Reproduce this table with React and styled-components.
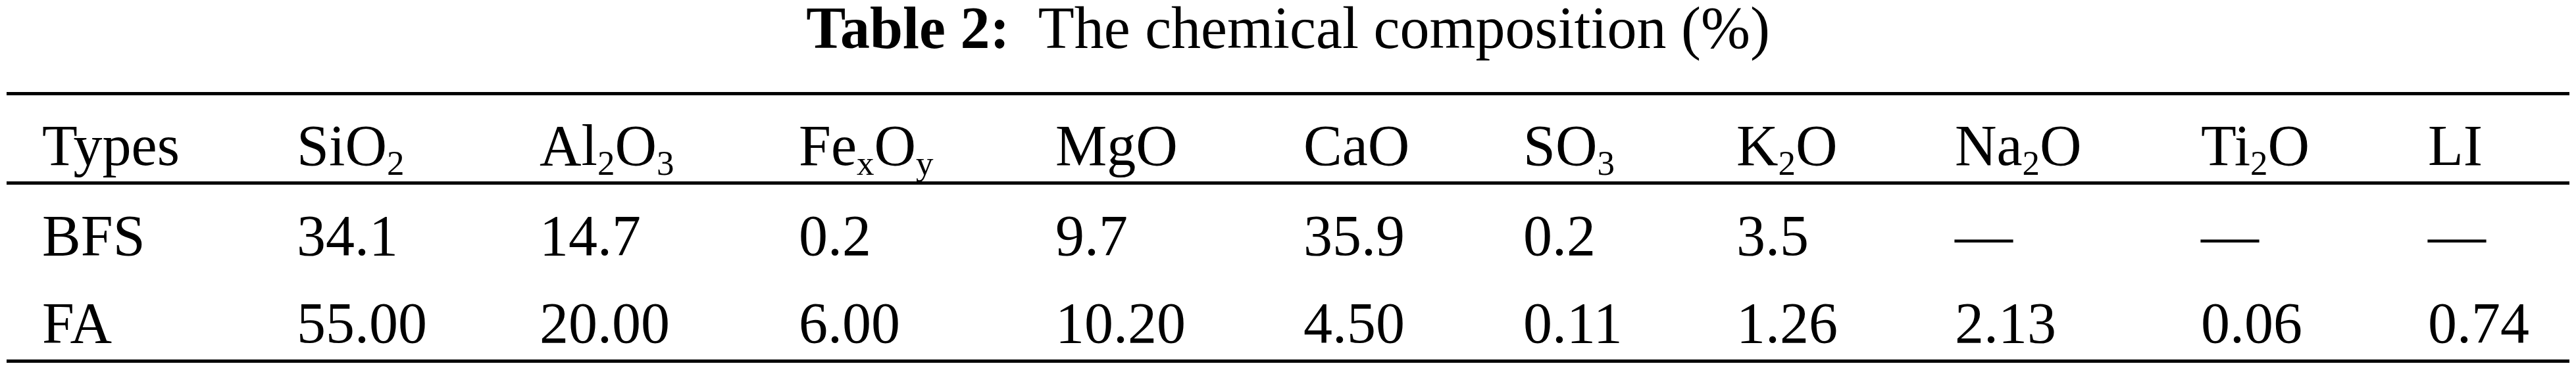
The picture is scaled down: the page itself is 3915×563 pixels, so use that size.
import React from "react";
import styled, { createGlobalStyle } from "styled-components";

const GlobalStyle = createGlobalStyle`
  html, body {
    margin: 0;
    padding: 0;
    background: #fff;
  }
  body {
    font-family: "Liberation Serif", "Times New Roman", serif;
    color: #000;
  }
`;

const Page = styled.div`
  width: 3915px;
  height: 563px;
  overflow: hidden;
  background: #fff;
  padding-top: 1px;
  box-sizing: border-box;
`;

const Caption = styled.div`
  text-align: center;
  font-size: 90px;
  line-height: 104px;
  margin-top: -10px;
  margin-bottom: 45px;
  white-space: pre;
`;

const Label = styled.span`
  font-weight: bold;
`;

const Table = styled.div`
  margin: 0 10px;
  border-top: 5px solid #000;
  border-bottom: 5px solid #000;
`;

const Row = styled.div`
  display: grid;
  grid-template-columns: 387px 369px 394px 390px 377px 334px 324px 332px 374px 345px 1fr;
  padding-left: 54px;
  box-sizing: border-box;
  height: ${props => (props.head ? "136px" : "133px")};
  padding-top: ${props => (props.head ? "33px" : "34px")};
  border-bottom: ${props => (props.head ? "5px solid #000" : "none")};
  font-size: 88px;
  line-height: 88px;
`;

const Cell = styled.div`
  white-space: nowrap;
`;

const Sub = styled.sub`
  font-size: 53px;
  line-height: 0;
  vertical-align: -15px;
`;

const headers = [
  "Types",
  <>SiO<Sub>2</Sub></>,
  <>Al<Sub>2</Sub>O<Sub>3</Sub></>,
  <>Fe<Sub>x</Sub>O<Sub>y</Sub></>,
  "MgO",
  "CaO",
  <>SO<Sub>3</Sub></>,
  <>K<Sub>2</Sub>O</>,
  <>Na<Sub>2</Sub>O</>,
  <>Ti<Sub>2</Sub>O</>,
  "LI",
];

const rows = [
  ["BFS", "34.1", "14.7", "0.2", "9.7", "35.9", "0.2", "3.5", "—", "—", "—"],
  ["FA", "55.00", "20.00", "6.00", "10.20", "4.50", "0.11", "1.26", "2.13", "0.06", "0.74"],
];

export default function App() {
  return (
    <Page>
      <GlobalStyle />
      <Caption>
        <Label>Table 2:</Label>{"  The chemical composition (%)"}
      </Caption>
      <Table>
        <Row head>
          {headers.map((h, i) => (
            <Cell key={i}>{h}</Cell>
          ))}
        </Row>
        {rows.map((r, ri) => (
          <Row key={ri}>
            {r.map((v, i) => (
              <Cell key={i}>{v}</Cell>
            ))}
          </Row>
        ))}
      </Table>
    </Page>
  );
}
